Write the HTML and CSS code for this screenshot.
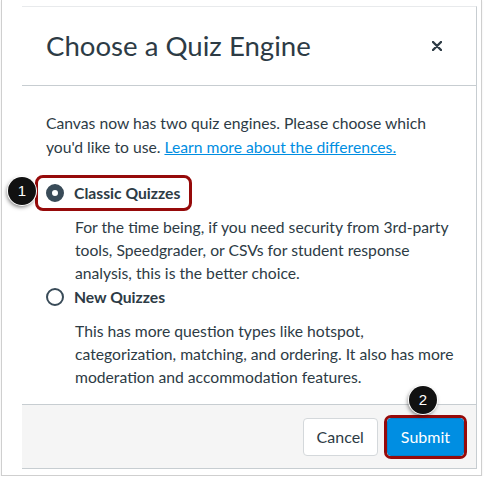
FILE: index.html
```html
<!DOCTYPE html>
<html>
<head>
<meta charset="utf-8">
<link rel="stylesheet" href="styles.css">
</head>
<body>
<div class="frame">
  <div class="dialog">
    <div class="head">
      <h1 class="title">Choose a Quiz Engine</h1>
      <span class="close" aria-label="Close">
        <svg width="10" height="10" viewBox="0 0 10 10"><path d="M1 1L9 9M9 1L1 9" stroke="#2d3b45" stroke-width="2.4" stroke-linecap="round"/></svg>
      </span>
    </div>
    <div class="body">
      <p class="intro">Canvas now has two quiz engines. Please choose which<br>you'd like to use. <a class="link" href="#">Learn more about the differences.</a></p>
      <div class="option">
        <div class="opt-row hl">
          <span class="badge badge-1">1</span>
          <span class="radio checked"></span>
          <span class="name">Classic Quizzes</span>
        </div>
        <p class="desc">For the time being, if you need security from 3rd-party<br>tools, Speedgrader, or CSVs for student response<br>analysis, this is the better choice.</p>
      </div>
      <div class="option">
        <div class="opt-row">
          <span class="radio"></span>
          <span class="name">New Quizzes</span>
        </div>
        <p class="desc">This has more question types like hotspot,<br>categorization, matching, and ordering. It also has more<br>moderation and accommodation features.</p>
      </div>
    </div>
    <div class="foot">
      <span class="btn cancel">Cancel</span>
      <span class="hl-btn">
        <span class="badge badge-2">2</span>
        <span class="btn submit">Submit</span>
      </span>
    </div>
  </div>
</div>
</body>
</html>
```
FILE: styles.css
```css
html, body {
  margin: 0;
  padding: 0;
  background: #fff;
}
body {
  font-family: Lato, "Open Sans", sans-serif;
  color: #2d3b45;
}
.frame {
  width: 481px;
  height: 476px;
  margin-left: 1px;
  box-sizing: border-box;
  border: 1px solid #cfcfcf;
  border-top: none;
  padding: 6px 4px 6px 20px;
  box-shadow: 0 1px 2px rgba(0,0,0,0.08);
}
.dialog {
  height: 100%;
  box-sizing: border-box;
  display: flex;
  flex-direction: column;
  border-top: 1px solid #e8eaec;
  border-right: 1px solid #c7cdd1;
  border-bottom: 1px solid #c7cdd1;
}
.head {
  height: 79px;
  flex: none;
  box-sizing: border-box;
  border-bottom: 1px solid #c7cdd1;
  display: flex;
  align-items: center;
  justify-content: space-between;
  padding: 0 34px 0 24px;
}
.title {
  margin: 0;
  font-size: 27.6px;
  font-weight: 400;
  line-height: 34px;
  color: #2d3b45;
}
.close {
  display: flex;
  width: 10px;
  height: 10px;
}
.body {
  flex: 1;
  min-height: 0;
  padding: 25px 0 0 24px;
  white-space: nowrap;
}
.intro {
  margin: 0 0 19px 0;
  font-size: 15.7px;
  line-height: 24px;
}
.link {
  color: #008ee2;
  text-decoration: underline;
}
.option {
  margin: 0;
}
.opt-row {
  display: inline-flex;
  align-items: center;
  height: 30px;
  padding: 0 9px 0 8px;
  margin: -3px 0 -3px -11px;
  border: 3px solid transparent;
  border-radius: 8px;
  position: relative;
  vertical-align: top;
}
.opt-row.hl {
  border-color: #960a0a;
}
.radio {
  width: 18px;
  height: 18px;
  box-sizing: border-box;
  border-radius: 50%;
  border: 2px solid #394b58;
  background: #fff;
  margin-right: 10px;
  flex: none;
}
.radio.checked {
  border-width: 6px;
}
.name {
  font-size: 15.7px;
  font-weight: 700;
  line-height: 20px;
}
.desc {
  margin: 8px 0 -3px 29px;
  font-size: 15.7px;
  line-height: 23px;
}
.badge {
  position: absolute;
  width: 28px;
  height: 28px;
  border-radius: 50%;
  background: #111;
  color: #fff;
  font-family: "Liberation Sans", Arial, sans-serif;
  font-size: 15px;
  line-height: 28px;
  text-align: center;
  box-shadow: 0 0 0 1px #fff, -1px 2px 4px rgba(0,0,0,0.55);
}
.badge-1 {
  left: -30px;
  top: -1px;
}
.foot {
  height: 64px;
  flex: none;
  box-sizing: border-box;
  border-top: 1px solid #c7cdd1;
  background: #f5f5f5;
  display: flex;
  align-items: center;
  justify-content: flex-end;
  padding-right: 9px;
}
.btn {
  display: inline-block;
  box-sizing: border-box;
  height: 38px;
  padding: 0 13px;
  font-size: 16px;
  line-height: 36px;
  border-radius: 4px;
  border: 1px solid transparent;
}
.cancel {
  background: #fff;
  border-color: #d4d8db;
  color: #2d3b45;
  margin-right: 6px;
}
.hl-btn {
  position: relative;
  display: inline-flex;
  border: 3px solid #960a0a;
  border-radius: 7px;
}
.submit {
  background: #008ee2;
  border-color: #0081cc;
  color: #fff;
}
.badge-2 {
  left: 22px;
  top: -32px;
}
```
